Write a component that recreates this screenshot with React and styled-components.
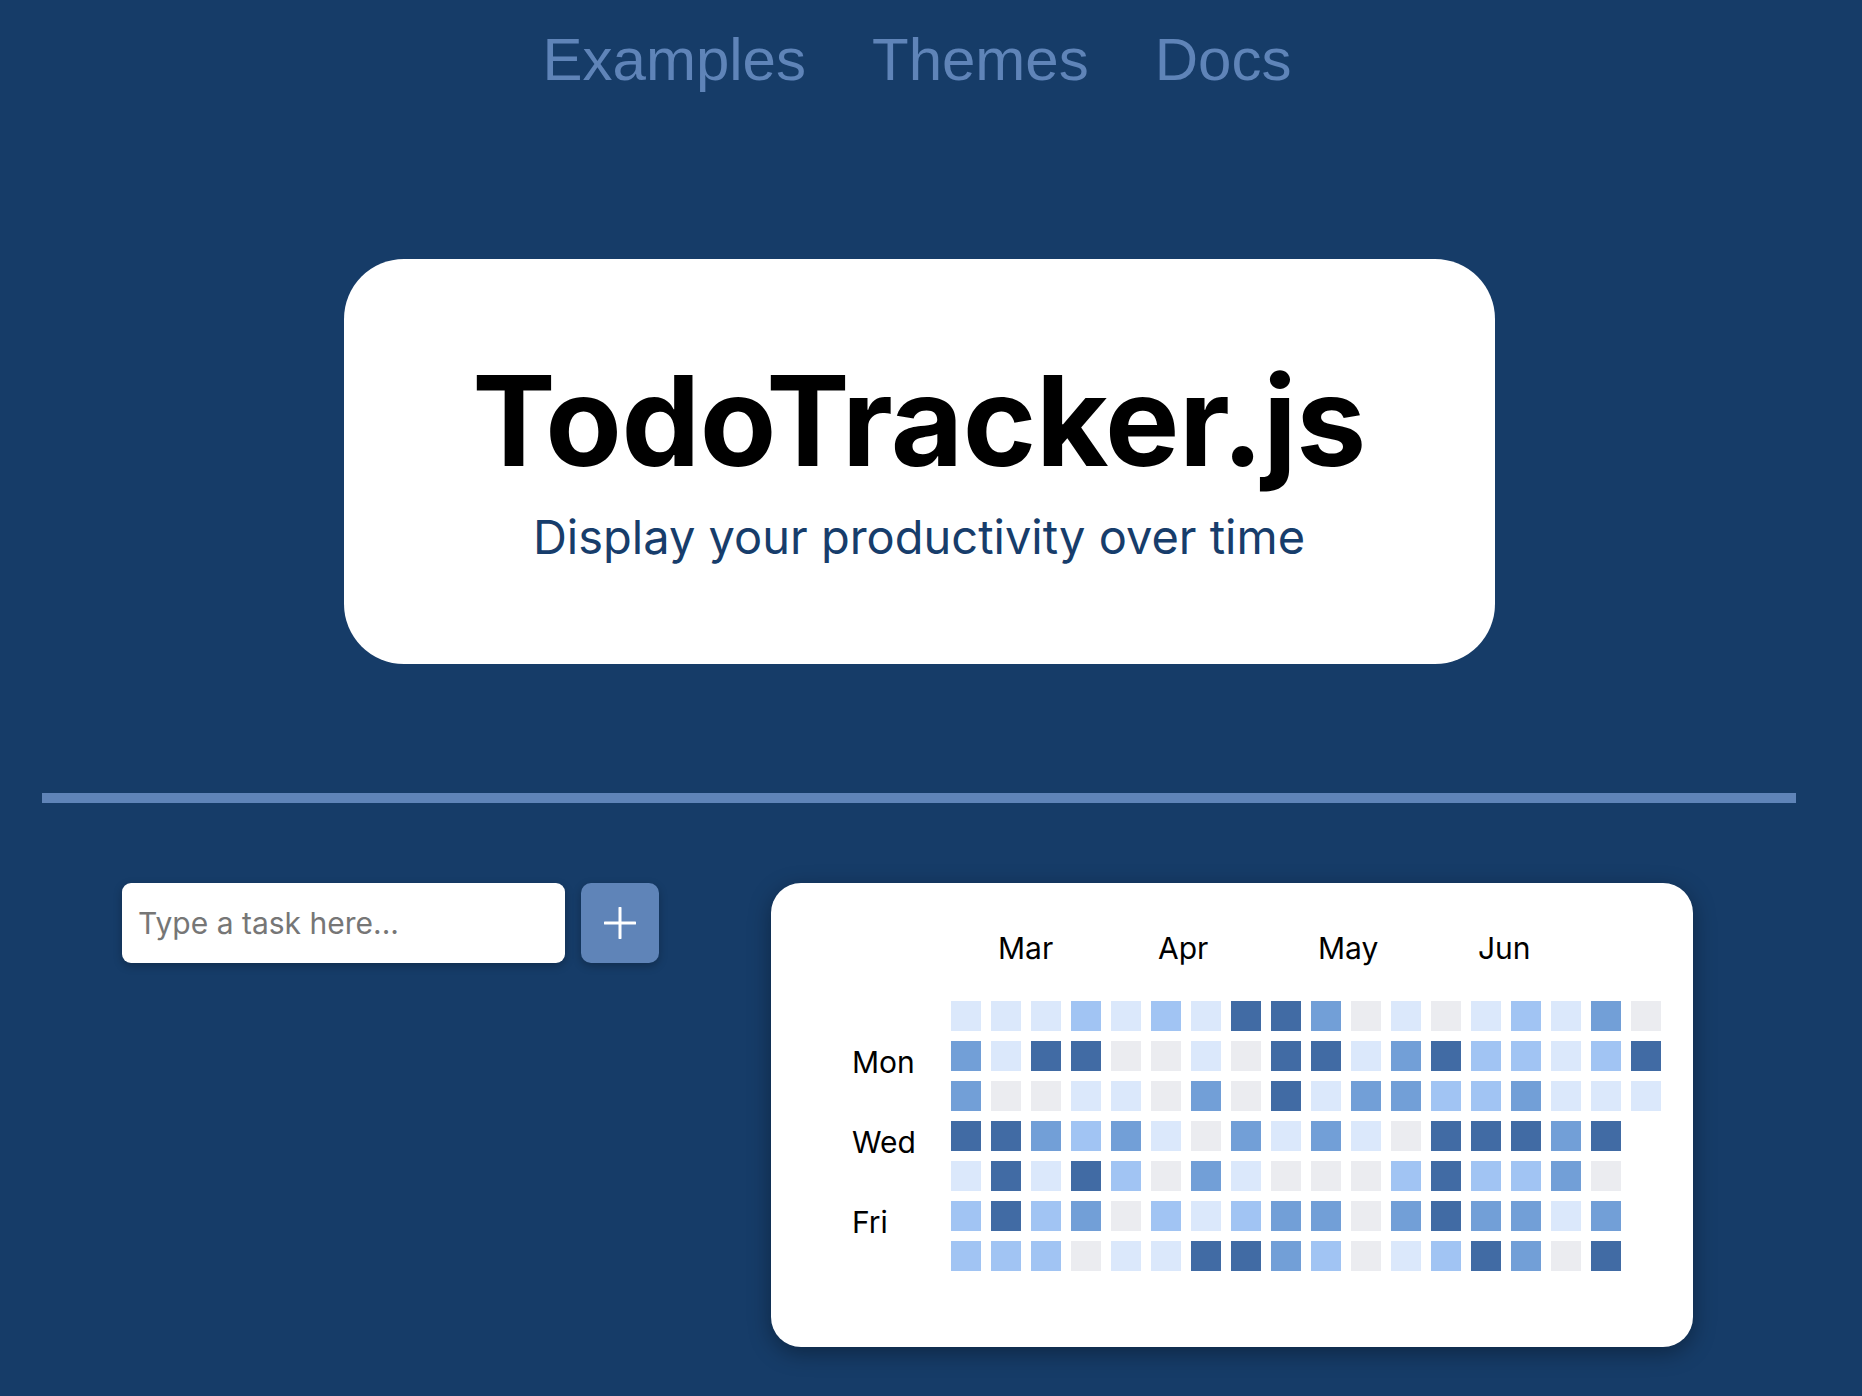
import React from "react";
import styled, { createGlobalStyle } from "styled-components";

const GlobalStyle = createGlobalStyle`
  html, body {
    margin: 0;
    padding: 0;
    background: #163c68;
  }
  body {
    min-height: 100vh;
    font-family: Inter, "Noto Sans", sans-serif;
  }
  * { box-sizing: border-box; }
`;

const Page = styled.div`
  width: 1838px;
  display: flex;
  flex-direction: column;
  align-items: center;
  padding-top: 25px;
`;

const Nav = styled.nav`
  display: flex;
  gap: 66px;
  height: 69px;
  margin-right: 4px;
`;

const NavLink = styled.a`
  font-family: "Liberation Sans", Arial, sans-serif;
  font-size: 60px;
  line-height: 69px;
  color: #5f84b8;
  text-decoration: none;
  cursor: pointer;
`;

const Hero = styled.header`
  margin-top: 165px;
  width: 1151px;
  background: #ffffff;
  border-radius: 60px;
  padding: 99px 0;
  display: flex;
  flex-direction: column;
  align-items: center;
`;

const Title = styled.h1`
  margin: 0;
  font-family: Inter, sans-serif;
  font-weight: 700;
  font-size: 125px;
  line-height: 125px;
  letter-spacing: -0.5px;
  color: #000;
`;

const Subtitle = styled.p`
  margin: 26px 0 0;
  font-family: Inter, sans-serif;
  font-size: 47px;
  line-height: 56px;
  color: #173d6b;
`;

const Divider = styled.hr`
  align-self: stretch;
  margin: 129px 42px 80px;
  height: 10px;
  border: 0;
  background: #5f84b8;
`;

const Workspace = styled.section`
  align-self: stretch;
  display: flex;
  align-items: flex-start;
  padding-left: 122px;
  gap: 112px;
`;

const TaskForm = styled.form`
  display: flex;
  gap: 16px;
`;

const TaskInput = styled.input`
  width: 443px;
  height: 80px;
  border: 0;
  border-radius: 9px;
  padding: 0 16px;
  font-family: Inter, sans-serif;
  font-size: 30px;
  color: #222;
  background: #fff;
  box-shadow: 0 3px 8px rgba(0, 0, 0, 0.25);
  outline: none;
  &::placeholder {
    color: #767676;
  }
`;

const AddButton = styled.button`
  width: 78px;
  height: 80px;
  border: 0;
  border-radius: 10px;
  background: #5f84b8;
  box-shadow: 0 3px 8px rgba(0, 0, 0, 0.25);
  display: flex;
  align-items: center;
  justify-content: center;
  padding: 0;
  cursor: pointer;
`;

const HeatCard = styled.div`
  width: 922px;
  background: #fff;
  border-radius: 30px;
  padding: 50px 32px 76px 81px;
  box-shadow: 0 6px 22px rgba(0, 0, 0, 0.35);
  display: grid;
  grid-template-columns: 89px auto;
  grid-template-rows: 58px auto;
  gap: 10px;
`;

const Months = styled.div`
  grid-column: 2;
  grid-row: 1;
  display: grid;
  grid-template-columns: repeat(18, 30px);
  column-gap: 10px;
`;

const MonthLabel = styled.span`
  grid-column: ${(p) => p.$col} / span 4;
  padding-left: 7px;
  font-size: 30px;
  line-height: 30px;
  color: #000;
  white-space: nowrap;
`;

const Days = styled.div`
  grid-column: 1;
  grid-row: 2;
  display: grid;
  grid-template-rows: repeat(7, 30px);
  row-gap: 10px;
`;

const DayLabel = styled.span`
  grid-row: ${(p) => p.$row};
  margin-top: 6px;
  font-size: 30px;
  line-height: 30px;
  color: #000;
  white-space: nowrap;
`;

const Cells = styled.div`
  grid-column: 2;
  grid-row: 2;
  display: grid;
  grid-template-rows: repeat(7, 30px);
  grid-auto-columns: 30px;
  grid-auto-flow: column;
  gap: 10px;
`;

const levelColors = ["#ebecf0", "#dbe8fb", "#a1c4f3", "#729fd7", "#416ba4"];

const Cell = styled.div`
  width: 30px;
  height: 30px;
  background: ${(p) => levelColors[p.$level]};
`;

const rows = [
  [1, 1, 1, 2, 1, 2, 1, 4, 4, 3, 0, 1, 0, 1, 2, 1, 3, 0],
  [3, 1, 4, 4, 0, 0, 1, 0, 4, 4, 1, 3, 4, 2, 2, 1, 2, 4],
  [3, 0, 0, 1, 1, 0, 3, 0, 4, 1, 3, 3, 2, 2, 3, 1, 1, 1],
  [4, 4, 3, 2, 3, 1, 0, 3, 1, 3, 1, 0, 4, 4, 4, 3, 4],
  [1, 4, 1, 4, 2, 0, 3, 1, 0, 0, 0, 2, 4, 2, 2, 3, 0],
  [2, 4, 2, 3, 0, 2, 1, 2, 3, 3, 0, 3, 4, 3, 3, 1, 3],
  [2, 2, 2, 0, 1, 1, 4, 4, 3, 2, 0, 1, 2, 4, 3, 0, 4],
];

const weeks = Array.from({ length: 18 }, (_, w) =>
  rows.map((r) => r[w]).filter((v) => v !== undefined)
);

const months = [
  { name: "Mar", col: 2 },
  { name: "Apr", col: 6 },
  { name: "May", col: 10 },
  { name: "Jun", col: 14 },
];

const days = [
  { name: "Mon", row: 2 },
  { name: "Wed", row: 4 },
  { name: "Fri", row: 6 },
];

const PlusIcon = () => (
  <svg width="32" height="32" viewBox="0 0 32 32" fill="none">
    <path d="M16 1v30M1 16h30" stroke="#fff" strokeWidth="3" strokeLinecap="round" />
  </svg>
);

export default function App() {
  return (
    <>
      <GlobalStyle />
      <Page>
        <Nav>
          <NavLink>Examples</NavLink>
          <NavLink>Themes</NavLink>
          <NavLink>Docs</NavLink>
        </Nav>
        <Hero>
          <Title>TodoTracker.js</Title>
          <Subtitle>Display your productivity over time</Subtitle>
        </Hero>
        <Divider />
        <Workspace>
          <TaskForm onSubmit={(e) => e.preventDefault()}>
            <TaskInput placeholder="Type a task here..." />
            <AddButton type="submit" aria-label="Add task">
              <PlusIcon />
            </AddButton>
          </TaskForm>
          <HeatCard>
            <Months>
              {months.map((m) => (
                <MonthLabel key={m.name} $col={m.col}>
                  {m.name}
                </MonthLabel>
              ))}
            </Months>
            <Days>
              {days.map((d) => (
                <DayLabel key={d.name} $row={d.row}>
                  {d.name}
                </DayLabel>
              ))}
            </Days>
            <Cells>
              {weeks.map((week, w) =>
                week.map((lvl, d) => <Cell key={`${w}-${d}`} $level={lvl} />)
              )}
            </Cells>
          </HeatCard>
        </Workspace>
      </Page>
    </>
  );
}
